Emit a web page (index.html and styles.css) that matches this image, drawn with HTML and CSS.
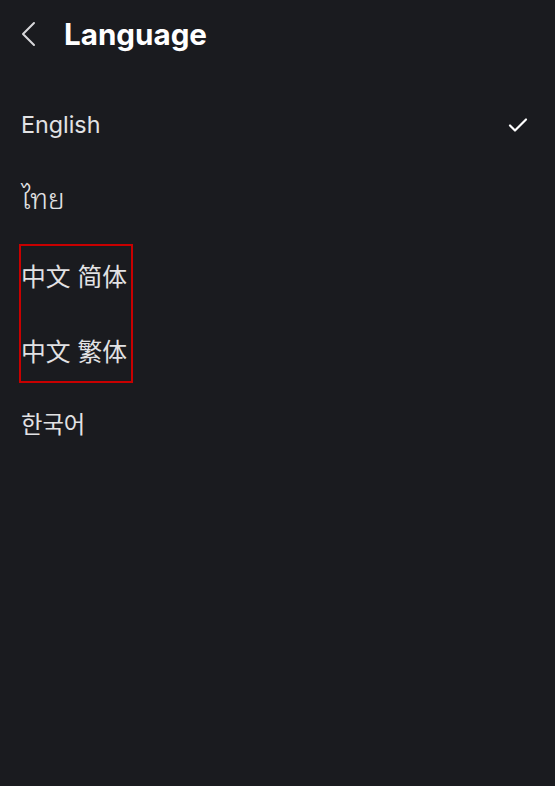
FILE: index.html
```html
<!DOCTYPE html>
<html lang="en">
<head>
<meta charset="utf-8">
<link rel="stylesheet" href="styles.css">
</head>
<body>
<header class="header">
  <svg class="back" width="18" height="26" viewBox="0 0 18 26"><path d="M15 2 L4 13 L15 24" fill="none" stroke="#d8d8da" stroke-width="2" stroke-linecap="round" stroke-linejoin="round"/></svg>
  <h1 class="title">Language</h1>
</header>
<ul class="list">
  <li class="row"><span class="en">English</span>
    <svg class="check" width="20" height="16" viewBox="0 0 20 16"><path d="M2 8.5 L7 13.5 L18 2.5" fill="none" stroke="#ffffff" stroke-width="2.2" stroke-linecap="round" stroke-linejoin="round"/></svg>
  </li>
  <li class="row"><span class="th" lang="th">ไทย</span></li>
  <li class="group">
    <div class="row"><span class="zh" lang="zh-CN">中文 简体</span></div>
    <div class="row"><span class="zh" lang="zh-TW">中文 繁体</span></div>
  </li>
  <li class="row"><span class="ko" lang="ko">한국어</span></li>
</ul>
</body>
</html>
```
FILE: styles.css
```css
html, body {
  margin: 0;
  padding: 0;
}
body {
  background: #1a1b1f;
  min-height: 786px;
  font-family: Inter, "Noto Sans", "Noto Sans CJK SC", sans-serif;
  color: #e2e2e4;
}
.header {
  height: 68px;
  display: flex;
  align-items: center;
  padding-left: 19px;
}
.back {
  display: block;
}
.title {
  margin: 0 0 0 27px;
  font-size: 29.6px;
  font-weight: 700;
  color: #ffffff;
}
.list {
  list-style: none;
  margin: 0;
  padding: 19px 0 0 0;
}
.row {
  height: 75px;
  display: flex;
  align-items: center;
  justify-content: space-between;
  padding: 0 27px 0 21px;
  font-size: 23.3px;
  color: #e2e2e4;
}
.en {
  font-family: Inter, sans-serif;
}
.th {
  font-family: "Noto Sans Thai Looped", "Noto Sans Thai", "DejaVu Sans", sans-serif;
  font-size: 28px;
  font-weight: 300;
  position: relative;
  top: -3px;
}
.zh {
  font-family: Inter, "Noto Sans CJK SC", sans-serif;
  font-size: 24.8px;
  font-weight: 400;
}
.zh:lang(zh-TW) {
  font-family: Inter, "Noto Sans CJK TC", "Noto Sans CJK SC", sans-serif;
}
.ko {
  font-family: "Noto Sans CJK KR", sans-serif;
  font-size: 23.3px;
  position: relative;
  top: -2px;
}
.check {
  display: block;
}
.group {
  position: relative;
}
.group::after {
  content: "";
  position: absolute;
  left: 19px;
  top: 7px;
  width: 110px;
  height: 135px;
  border: 2px solid #c80000;
  pointer-events: none;
}
```
